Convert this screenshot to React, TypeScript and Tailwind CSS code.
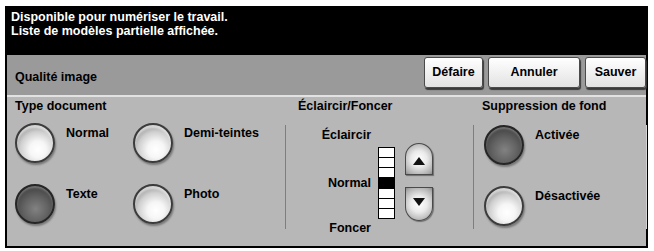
import React from "react";

const font = "font-['Liberation_Sans',Arial,sans-serif]";

function Radio({ on }: { on?: boolean }) {
  return (
    <div
      className={
        on
          ? "w-[40px] h-[40px] shrink-0 rounded-full border-2 border-[#262626] bg-[radial-gradient(circle_at_52%_64%,#828282_0%,#636363_40%,#444444_75%,#2a2a2a_100%)] shadow-[inset_0_2px_2px_rgba(255,255,255,0.25),1px_2px_2px_rgba(0,0,0,0.35)]"
          : "w-[40px] h-[40px] shrink-0 rounded-full border-2 border-[#3c3c3c] bg-[radial-gradient(circle_at_58%_68%,#ffffff_0%,#f6f6f6_26%,#cfcfcf_55%,#949494_80%,#5e5e5e_100%)] shadow-[inset_0_3px_2px_rgba(255,255,255,0.55),1px_2px_2px_rgba(0,0,0,0.35)]"
      }
    />
  );
}

function Option({ label, on }: { label: string; on?: boolean }) {
  return (
    <div className="flex items-start gap-[11px]">
      <Radio on={on} />
      <span className="pt-[3px] text-[12.5px] font-bold leading-[14px] text-black">{label}</span>
    </div>
  );
}

function BarButton({ label, w }: { label: string; w: string }) {
  return (
    <button
      className={`${w} h-[31px] rounded-[3px] border border-[#4a4a4a] bg-[linear-gradient(#ffffff,#e2e2e2)] shadow-[1px_2px_1px_#3a3a3a] text-[12.5px] font-bold text-black`}
    >
      {label}
    </button>
  );
}

function Arrow({ up }: { up?: boolean }) {
  return (
    <div
      className={`w-[28px] ${up ? "h-[32px] rounded-t-full rounded-b-[4px]" : "h-[34px] rounded-b-full rounded-t-[4px]"} flex items-center justify-center border border-[#4a4a4a] bg-[radial-gradient(circle_at_50%_50%,#ffffff_0%,#eaeaea_40%,#adadad_85%,#8a8a8a_100%)] shadow-[1px_1px_1px_rgba(0,0,0,0.4)]`}
    >
      <svg width="12" height="8" viewBox="0 0 12 8" className={up ? "mt-[4px]" : "mb-[4px]"}>
        {up ? <polygon points="6,0 12,8 0,8" fill="#111" /> : <polygon points="0,0 12,0 6,8" fill="#111" />}
      </svg>
    </div>
  );
}

export default function App() {
  const cells = [0, 1, 2, 3, 4, 5, 6];

  return (
    <div className={`w-[654px] h-[251px] bg-white pt-[6px] pl-[5px] ${font}`}>
      <div className="w-[643px] h-[242px] bg-black px-[2px] pb-[2px] flex flex-col">
        <div className="h-[49px] pl-[4px] pt-[4px] text-[12.5px] font-bold leading-[14px] text-white">
          <p>Disponible pour numériser le travail.</p>
          <p>Liste de modèles partielle affichée.</p>
        </div>

        <div className="h-[40px] bg-[#9a9a9a] flex items-center justify-between pl-[8px] pb-[5px]">
          <span className="mt-[10px] text-[12.5px] font-bold text-black">Qualité image</span>
          <div className="flex gap-[5px]">
            <BarButton label="Défaire" w="w-[59px]" />
            <BarButton label="Annuler" w="w-[92px]" />
            <BarButton label="Sauver" w="w-[61px]" />
          </div>
        </div>

        <div className="flex-1 border-t-2 border-[#e2e2e2] bg-[#b7b7b7] flex text-black">
          <div className="w-[278px] flex flex-col">
            <div className="pl-[8px] pt-[2px] text-[12.5px] font-bold leading-[14px]">Type document</div>
            <div className="mt-[10px] ml-[8px] grid grid-cols-[118px_1fr] gap-y-[21px]">
              <Option label="Normal" />
              <Option label="Demi-teintes" />
              <Option label="Texte" on />
              <Option label="Photo" />
            </div>
          </div>

          <div className="w-[188px] flex flex-col">
            <div className="pl-[13px] pt-[2px] text-[12.5px] font-bold leading-[14px]">Éclaircir/Foncer</div>
            <div className="mt-[12px] h-[104px] border-l border-[#7e7e7e] shadow-[1px_0_0_#d4d4d4] flex">
              <div className="w-[85px] flex flex-col items-end text-[12.5px] font-bold leading-[14px]">
                <span className="mt-[3px]">Éclaircir</span>
                <span className="mt-[34px]">Normal</span>
                <span className="mt-[31px]">Foncer</span>
              </div>
              <div className="ml-[7px] mt-[22px] w-[17px] h-[72px] border border-black flex flex-col">
                {cells.map((c) => (
                  <div
                    key={c}
                    className={`flex-1 ${c > 0 ? "border-t border-black" : ""} ${c === 3 ? "bg-black" : "bg-white"}`}
                  />
                ))}
              </div>
              <div className="ml-[10px] mt-[18px] flex flex-col gap-[12px]">
                <Arrow up />
                <Arrow />
              </div>
            </div>
          </div>

          <div className="flex-1 flex flex-col">
            <div className="pl-[9px] pt-[2px] text-[12.5px] font-bold leading-[14px]">Suppression de fond</div>
            <div className="mt-[12px] h-[104px] border-l border-[#7e7e7e] shadow-[1px_0_0_#d4d4d4] pl-[10px] flex flex-col gap-[21px]">
              <Option label="Activée" on />
              <Option label="Désactivée" />
            </div>
          </div>
        </div>
      </div>
    </div>
  );
}
